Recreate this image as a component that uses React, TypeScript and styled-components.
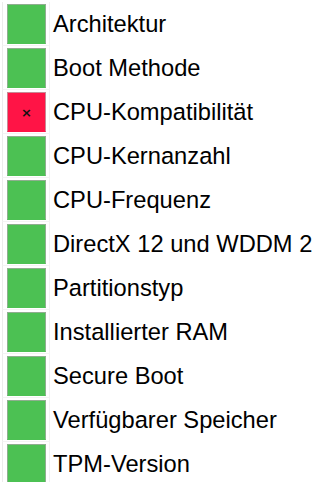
import React from "react";
import styled, { createGlobalStyle } from "styled-components";

const GlobalStyle = createGlobalStyle`
  html, body {
    margin: 0;
    padding: 0;
    background: #fff;
  }
  body {
    font-family: "Liberation Sans", Arial, sans-serif;
  }
`;

const checks = [
  { name: "Architektur", ok: true },
  { name: "Boot Methode", ok: true },
  { name: "CPU-Kompatibilität", ok: false },
  { name: "CPU-Kernanzahl", ok: true },
  { name: "CPU-Frequenz", ok: true },
  { name: "DirectX 12 und WDDM 2", ok: true },
  { name: "Partitionstyp", ok: true },
  { name: "Installierter RAM", ok: true },
  { name: "Secure Boot", ok: true },
  { name: "Verfügbarer Speicher", ok: true },
  { name: "TPM-Version", ok: true },
];

function App() {
  return (
    <>
      <GlobalStyle />
      <CheckList>
        {checks.map((c) => (
          <Row key={c.name}>
            <Cell>
              <StatusBox ok={c.ok}>{!c.ok && <Cross>×</Cross>}</StatusBox>
            </Cell>
            <Label>{c.name}</Label>
          </Row>
        ))}
      </CheckList>
    </>
  );
}

const CheckList = styled.div`
  display: flex;
  flex-direction: column;
  padding-top: 2px;
  width: 332px;
  height: 482px;
  overflow: hidden;
`;

const Row = styled.div`
  display: flex;
  align-items: center;
  height: 44px;
  flex-shrink: 0;
`;

const Cell = styled.div`
  display: flex;
  align-items: center;
  justify-content: center;
  box-sizing: border-box;
  margin-left: 2px;
  width: 48px;
  height: 44px;
  padding-left: 1px;
  border-left: 1px solid #ececec;
  border-right: 1px solid #f2f2f2;
  border-bottom: 1px solid #f4f4f4;
`;

const StatusBox = styled.div<{ ok: boolean }>`
  display: flex;
  align-items: center;
  justify-content: center;
  box-sizing: border-box;
  width: 39px;
  height: 40px;
  background: ${(p) => (p.ok ? "#4cc153" : "#ff1446")};
  border: 1px solid ${(p) => (p.ok ? "#8fae8f" : "#c88a95")};
  border-bottom-color: ${(p) => (p.ok ? "#4cc153" : "#ff1446")};
`;

const Cross = styled.span`
  font-family: "DejaVu Sans", sans-serif;
  font-weight: bold;
  font-size: 13px;
  line-height: 1;
  color: #111;
  margin-top: 1px;
`;

const Label = styled.span`
  margin-left: 3px;
  font-size: 23.7px;
  line-height: 38px;
  color: #000;
  white-space: nowrap;
`;

export default App;
